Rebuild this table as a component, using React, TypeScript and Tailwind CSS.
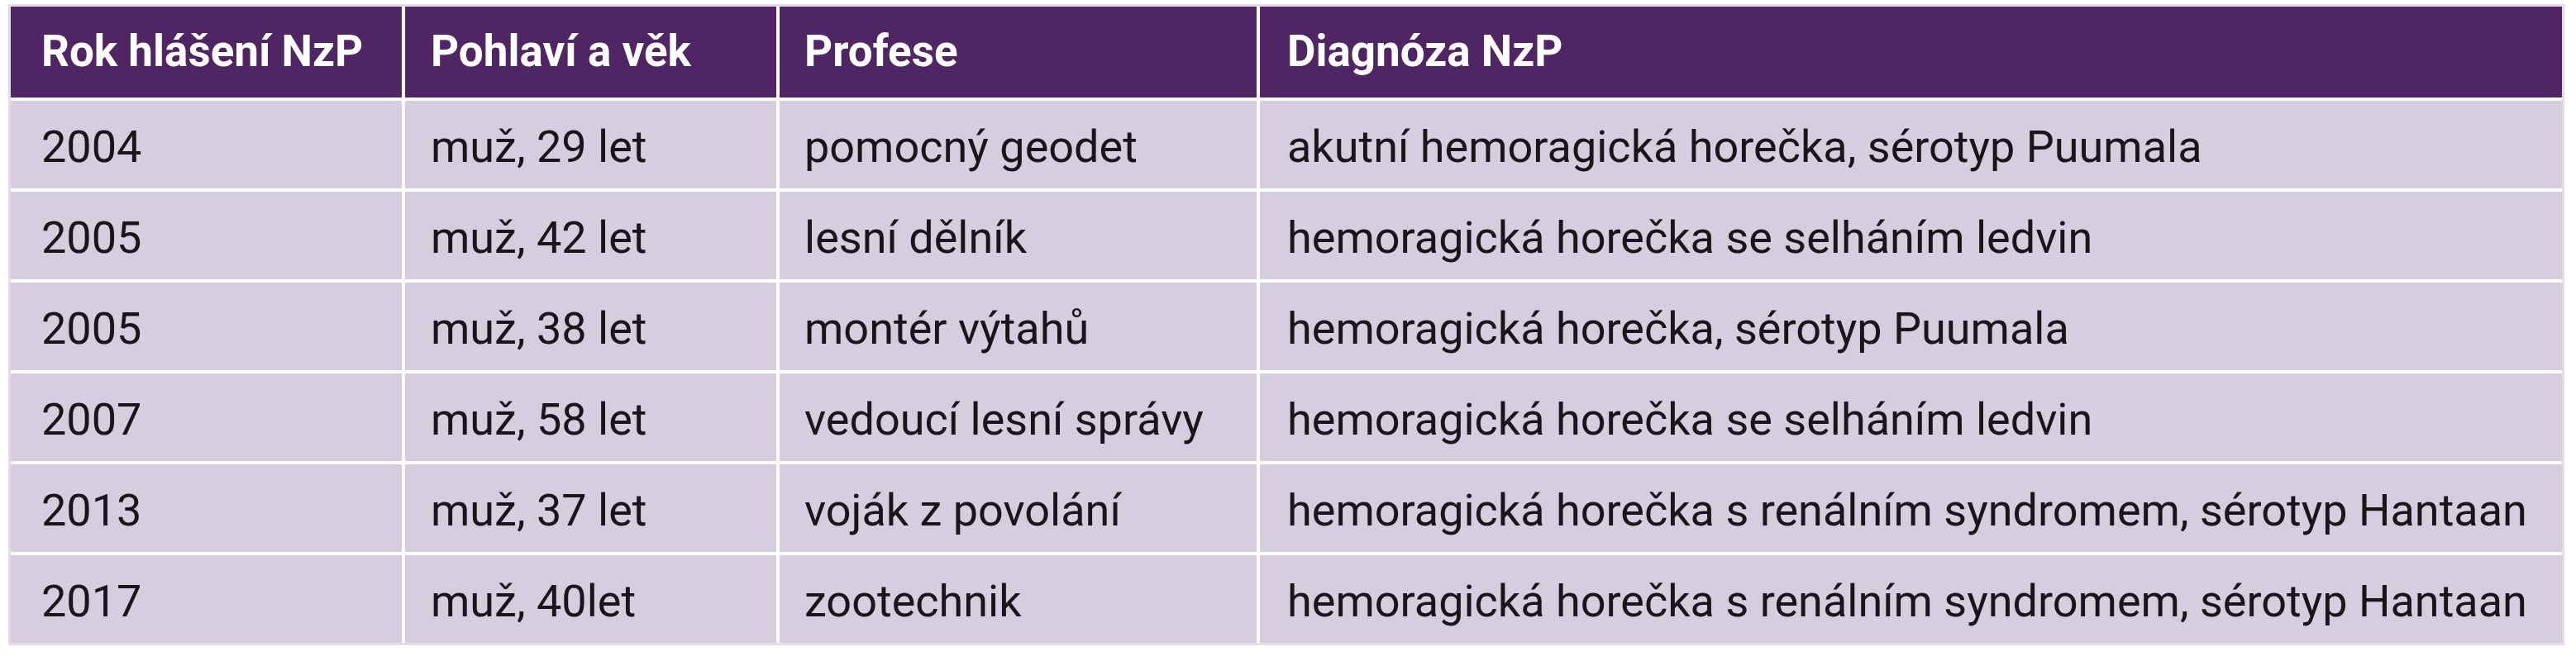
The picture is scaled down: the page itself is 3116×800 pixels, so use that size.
const headers = ["Rok hlášení NzP", "Pohlaví a věk", "Profese", "Diagnóza NzP"]

const rows = [
  ["2004", "muž, 29 let", "pomocný geodet", "akutní hemoragická horečka, sérotyp Puumala"],
  ["2005", "muž, 42 let", "lesní dělník", "hemoragická horečka se selháním ledvin"],
  ["2005", "muž, 38 let", "montér výtahů", "hemoragická horečka, sérotyp Puumala"],
  ["2007", "muž, 58 let", "vedoucí lesní správy", "hemoragická horečka se selháním ledvin"],
  ["2013", "muž, 37 let", "voják z povolání", "hemoragická horečka s renálním syndromem, sérotyp Hantaan"],
  ["2017", "muž, 40let", "zootechnik", "hemoragická horečka s renálním syndromem, sérotyp Hantaan"],
]

const pads = ["pl-[37px]", "pl-[31px]", "pl-[30px]", "pl-[33px]"]

export default function App() {
  return (
    <div className="min-h-screen bg-white pl-[10px] pt-[5px] font-['Roboto',sans-serif]">
      <div className="w-[3092px] border-[3px] border-[#e5dbe8] bg-white">
        <div className="grid grid-cols-[473px_449px_577px_1575px] gap-x-[4px] gap-y-[4px]">
          {headers.map((h, i) => (
            <div
              key={h}
              className={`flex h-[110px] items-center bg-[#4f2563] text-[53px] font-bold text-white ${pads[i]}`}
            >
              {h}
            </div>
          ))}
          {rows.map((row, r) =>
            row.map((cell, i) => (
              <div
                key={`${r}-${i}`}
                className={`flex h-[106px] items-center bg-[#d6cddf] pt-[4px] text-[54px] text-[#18161b] ${pads[i]}`}
              >
                {cell}
              </div>
            ))
          )}
        </div>
      </div>
    </div>
  )
}
